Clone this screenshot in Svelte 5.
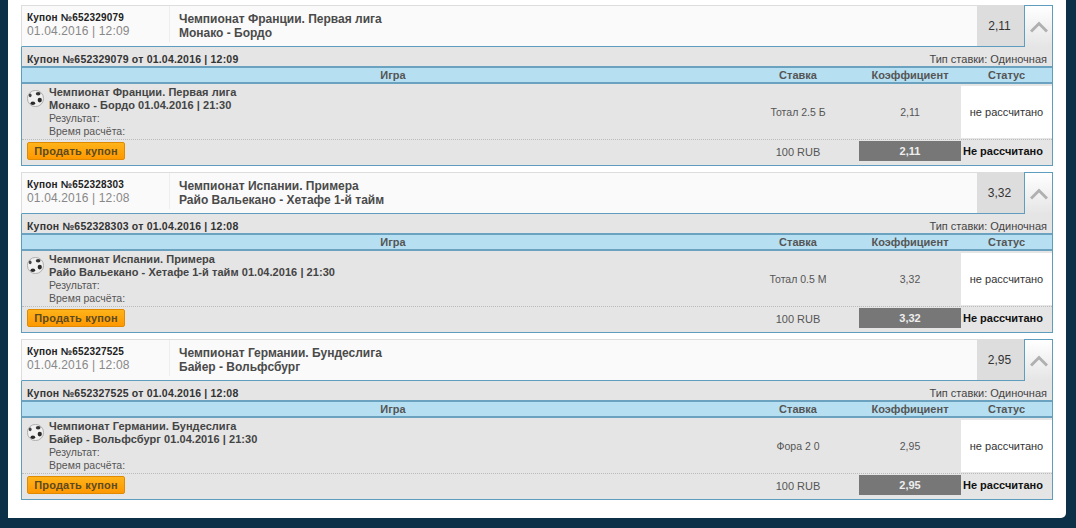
<script>
  const coupons = [
    { id: '652329079', date: '01.04.2016 | 12:09', league: 'Чемпионат Франции. Первая лига', match: 'Монако - Бордо', start: '01.04.2016 | 21:30', bet: 'Тотал 2.5 Б', odds: '2,11' },
    { id: '652328303', date: '01.04.2016 | 12:08', league: 'Чемпионат Испании. Примера', match: 'Райо Вальекано - Хетафе 1-й тайм', start: '01.04.2016 | 21:30', bet: 'Тотал 0.5 М', odds: '3,32' },
    { id: '652327525', date: '01.04.2016 | 12:08', league: 'Чемпионат Германии. Бундеслига', match: 'Байер - Вольфсбург', start: '01.04.2016 | 21:30', bet: 'Фора 2 0', odds: '2,95' }
  ];
</script>

<style>
  :global(body) {
    background: #0d3049;
    font-family: "Liberation Sans", Arial, sans-serif;
  }

  .panel {
    width: 1058px;
    height: 518px;
    margin-left: 8px;
    box-sizing: border-box;
    padding: 5px 13px 0;
    background: #fff;
    border-bottom-right-radius: 5px;
    color: #333;
  }

  .coupon {
    height: 161px;
    margin-bottom: 6px;
    width: 1032px;
  }

  .head {
    display: flex;
    height: 42px;
  }

  .summary {
    flex: 1;
    display: flex;
    box-sizing: border-box;
    background: #fafafa;
    border-top: 1px solid #ddd;
    border-left: 1px solid #ddd;
    border-bottom: 1px solid #5f9dbf;
  }

  .num {
    width: 148px;
    box-sizing: border-box;
    padding: 6px 0 0 5px;
    border-right: 1px solid #eee;
    margin-bottom: 4px;
  }

  .num b {
    display: block;
    font-size: 10px;
    line-height: 12px;
    color: #222;
    letter-spacing: 0.2px;
  }

  .num span {
    display: block;
    font-size: 12px;
    line-height: 14px;
    color: #888;
    letter-spacing: 0.15px;
  }

  .title {
    flex: 1;
    padding: 6px 0 0 9px;
    font-size: 12px;
    line-height: 14px;
    font-weight: bold;
    color: #4a4a4a;
  }

  .odds {
    width: 47px;
    display: flex;
    align-items: center;
    justify-content: center;
    background: #ddd;
    font-size: 12px;
    color: #333;
    padding-right: 2px;
    box-sizing: border-box;
  }

  .toggle {
    width: 29px;
    box-sizing: border-box;
    display: flex;
    align-items: center;
    justify-content: center;
    border: 1px solid #5f9dbf;
    border-bottom: none;
    background: linear-gradient(#fff, #e5e5e5);
  }

  .details {
    height: 119px;
    box-sizing: border-box;
    border: 1px solid #5f9dbf;
    border-top: none;
    background: #e5e5e5;
    font-size: 11px;
  }

  .caption {
    display: flex;
    justify-content: space-between;
    height: 19px;
    align-items: center;
    padding: 4px 5px 0;
    box-sizing: border-box;
  }

  .caption b {
    font-size: 10.5px;
    color: #333;
    letter-spacing: 0.2px;
  }

  .caption span {
    color: #444;
  }

  .cols {
    display: grid;
    grid-template-columns: 742px 95px 102px 91px;
  }

  .stake {
    padding-right: 27px;
  }

  .thead {
    align-items: center;
    background: #b6e0f2;
    border-top: 2px solid #6aa2c0;
    border-bottom: 2px solid #6aa2c0;
    height: 14px;
    text-align: center;
    font-weight: bold;
    color: #555;
    line-height: 14px;
  }

  .row {
    height: 52px;
    margin-top: 2px;
    align-items: center;
    text-align: center;
    color: #555;
    border-bottom: 1px dotted #bbb;
    padding-bottom: 1px;
    font-size: 10.5px;
  }

  .event {
    display: flex;
    gap: 5px;
    padding-left: 5px;
    text-align: left;
    align-self: start;
    line-height: 13px;
    font-size: 11px;
  }

  .ball {
    width: 17px;
    height: 17px;
    margin-top: 4px;
    flex: none;
  }

  .event b {
    display: block;
    color: #444;
    letter-spacing: 0.05px;
  }

  .event span {
    display: block;
    color: #555;
    font-size: 10.5px;
  }

  .status {
    align-self: stretch;
    background: #fff;
    color: #333;
    display: flex;
    align-items: center;
    justify-content: center;
    font-size: 11px;
  }

  .foot {
    margin-top: 1px;
    height: 20px;
    align-items: center;
    text-align: center;
    color: #555;
  }

  .foot .stake {
    padding-top: 1px;
  }

  .sell {
    justify-self: start;
    margin-left: 5px;
    width: 98px;
    height: 18px;
    padding: 0;
    border: 1px solid #e08a00;
    border-radius: 2px;
    background: linear-gradient(#ffb31a, #ff9800);
    font: bold 11px "Liberation Sans", Arial, sans-serif;
    color: #5c4a1e;
    letter-spacing: 0.2px;
  }

  .total {
    align-self: stretch;
    display: flex;
    align-items: center;
    justify-content: center;
    background: #777;
    color: #eee;
    font-weight: bold;
  }

  .state {
    font-weight: bold;
    color: #111;
    text-align: left;
    padding-left: 2px;
    white-space: nowrap;
  }
</style>

<div class="panel">
  {#each coupons as c}
    <section class="coupon">
      <div class="head">
        <div class="summary">
          <div class="num">
            <b>Купон №{c.id}</b>
            <span>{c.date}</span>
          </div>
          <div class="title">{c.league}<br />{c.match}</div>
          <div class="odds">{c.odds}</div>
        </div>
        <div class="toggle">
          <svg width="18" height="12" viewBox="0 0 18 12">
            <path d="M1 10.5 L9 2.5 L17 10.5" fill="none" stroke="#b0b0b0" stroke-width="3" />
          </svg>
        </div>
      </div>
      <div class="details">
        <div class="caption">
          <b>Купон №{c.id} от {c.date}</b>
          <span>Тип ставки: Одиночная</span>
        </div>
        <div class="cols thead">
          <div>Игра</div>
          <div class="stake">Ставка</div>
          <div>Коэффициент</div>
          <div>Статус</div>
        </div>
        <div class="cols row">
          <div class="event">
            <svg class="ball" viewBox="0 0 16 16">
              <circle cx="8" cy="8" r="7.6" fill="#f0f0f0" stroke="#9a9a9a" stroke-width="0.7" />
              <ellipse cx="10.5" cy="3.5" rx="2.2" ry="1.6" fill="#333" />
              <ellipse cx="12" cy="9.5" rx="2" ry="2.2" fill="#2a2a2a" />
              <ellipse cx="3" cy="5" rx="1.3" ry="1.8" fill="#444" />
              <ellipse cx="5.5" cy="12.5" rx="2.2" ry="1.6" fill="#2a2a2a" />
            </svg>
            <div>
              <b>{c.league}</b>
              <b>{c.match} {c.start}</b>
              <span>Результат:</span>
              <span>Время расчёта:</span>
            </div>
          </div>
          <div class="stake">{c.bet}</div>
          <div>{c.odds}</div>
          <div class="status">не рассчитано</div>
        </div>
        <div class="cols foot">
          <button class="sell">Продать купон</button>
          <div class="stake">100 RUB</div>
          <div class="total">{c.odds}</div>
          <div class="state">Не рассчитано</div>
        </div>
      </div>
    </section>
  {/each}
</div>
